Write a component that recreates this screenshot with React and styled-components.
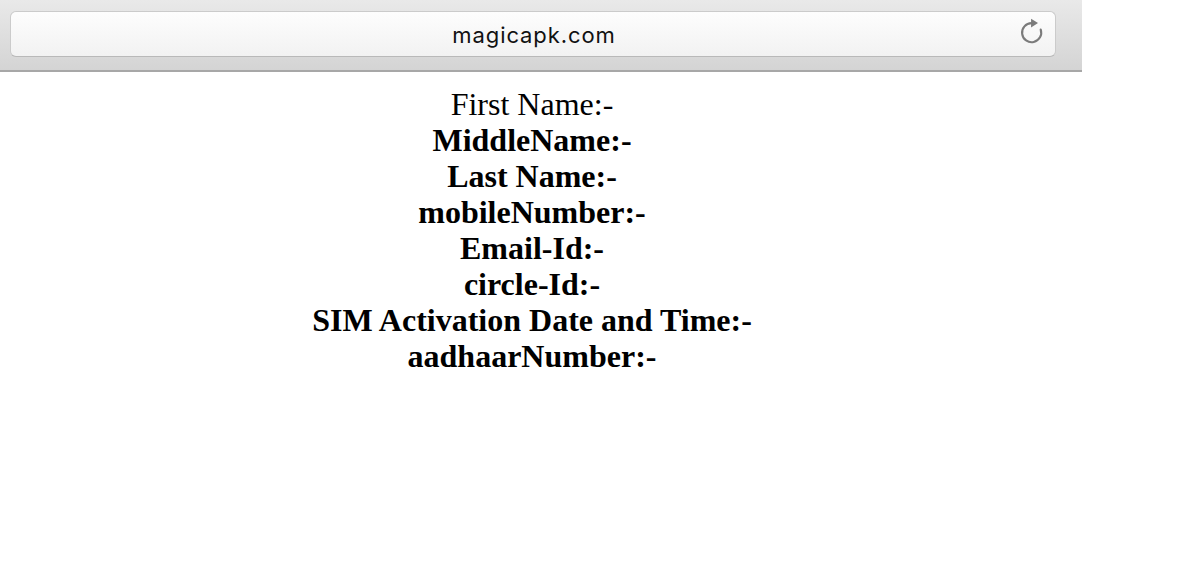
import styled, { createGlobalStyle } from 'styled-components';

const GlobalStyle = createGlobalStyle`
    html, body {
        margin: 0;
        padding: 0;
        background: #fff;
    }
`;

const fields = [
    { label: 'First Name:-', bold: false },
    { label: 'MiddleName:-', bold: true },
    { label: 'Last Name:-', bold: true },
    { label: 'mobileNumber:-', bold: true },
    { label: 'Email-Id:-', bold: true },
    { label: 'circle-Id:-', bold: true },
    { label: 'SIM Activation Date and Time:-', bold: true },
    { label: 'aadhaarNumber:-', bold: true },
];

function ReloadIcon() {
    return (
        <svg width="27" height="27" viewBox="0 0 24 24">
            <path
                d="M12 4.5 A8.5 8.5 0 1 0 20.2 10.3"
                fill="none"
                stroke="#7b7b7b"
                strokeWidth="1.9"
                strokeLinecap="round"
            />
            <polygon points="11.6,0.6 17.8,4.5 11.6,8.4" fill="#7b7b7b" />
        </svg>
    );
}

export default function App() {
    return (
        <Page>
            <GlobalStyle />
            <Toolbar>
                <AddressField>
                    <Url>magicapk.com</Url>
                    <Reload>
                        <ReloadIcon />
                    </Reload>
                </AddressField>
            </Toolbar>
            <Details>
                {fields.map(f => (
                    <Line key={f.label} bold={f.bold}>{f.label}</Line>
                ))}
            </Details>
        </Page>
    );
}

const Page = styled.div`
    width: 1200px;
    min-height: 564px;
    background: #fff;
`;

const Toolbar = styled.div`
    width: 1082px;
    height: 72px;
    box-sizing: border-box;
    padding: 11px 26px 0 10px;
    background: linear-gradient(to bottom, #e9e9e9, #d4d4d4);
    border-bottom: 2px solid #a7a7a7;
`;

const AddressField = styled.div`
    position: relative;
    height: 46px;
    box-sizing: border-box;
    display: flex;
    align-items: center;
    justify-content: center;
    background: linear-gradient(to bottom, #fdfdfd, #f2f2f2);
    border: 1px solid #cbcbcb;
    border-bottom-color: #b9b9b9;
    border-radius: 6px;
`;

const Url = styled.span`
    font-family: "Inter", "Liberation Sans", sans-serif;
    font-size: 22px;
    letter-spacing: 0.9px;
    color: #111;
    margin-left: 2px;
    margin-top: 2px;
`;

const Reload = styled.div`
    position: absolute;
    right: 10px;
    top: 6px;
    display: flex;
`;

const Details = styled.div`
    width: 1064px;
    padding-top: 14px;
    text-align: center;
    font-family: "Liberation Serif", "Times New Roman", serif;
    font-size: 32px;
    line-height: 36px;
    color: #000;
`;

const Line = styled.div`
    font-weight: ${p => (p.bold ? 700 : 400)};
`;
